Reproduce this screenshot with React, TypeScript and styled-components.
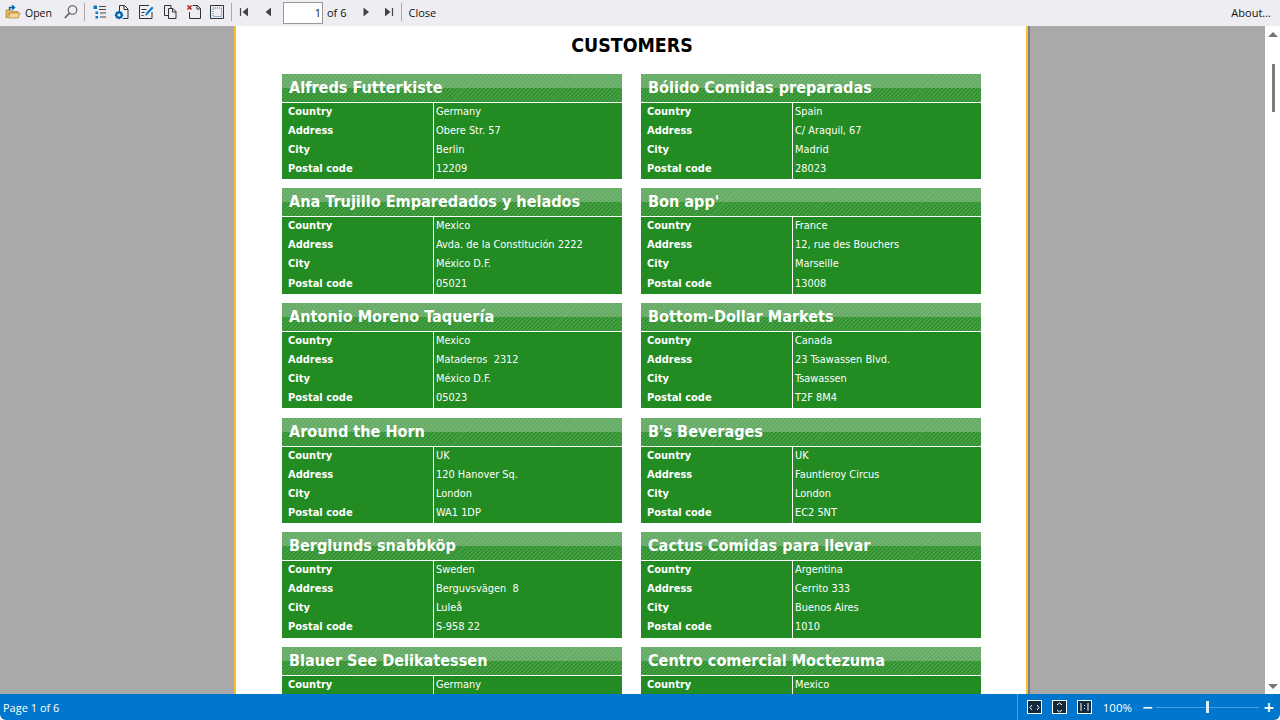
import React from "react";
import styled, { createGlobalStyle } from "styled-components";

const Global = createGlobalStyle`
  html, body { margin: 0; padding: 0; height: 100%; overflow: hidden; }
  #root { height: 100%; }
`;

const Shell = styled.div`
  width: 1280px; height: 720px; display: flex; flex-direction: column;
  font-family: "Open Sans", "Noto Sans", sans-serif; overflow: hidden;
`;
const Toolbar = styled.div`
  height: 26px; flex: none; background: #eeeef2; display: flex; align-items: center;
  color: #111; font-size: 11px; line-height: 24px; padding: 0 0 2px 5px; box-sizing: border-box;
`;
const ToolIcon = styled.span<{ $w?: number }>`
  width: ${(p) => p.$w ?? 24}px; height: 24px; flex: none; display: flex; align-items: center; justify-content: center;
`;
const Sep = styled.span<{ $mx?: number }>`
  width: 1px; height: 18px; background: #a9a9ad; flex: none; margin: 0 ${(p) => p.$mx ?? 4}px;
`;
const ToolLabel = styled.span<{ $mr?: number; $ml?: number }>`
  white-space: nowrap; margin-top: 2px; margin-left: ${(p) => p.$ml ?? 0}px; margin-right: ${(p) => p.$mr ?? 0}px;
`;
const OpenLabel = styled(ToolLabel)`font-size: 10.5px; width: 27px; margin-right: 11px;`;
const PageInput = styled.div`
  width: 37px; height: 20px; border: 1px solid #999; background: #fff; text-align: right;
  line-height: 20px; font-size: 11px; padding-right: 1px; margin: 2px 4px 0 2px; flex: none;
`;
const Spacer = styled.div`flex: 1;`;

const Middle = styled.div`flex: 1; min-height: 0; display: flex;`;
const Viewer = styled.div`
  flex: 1; background: #a9a9a9; overflow: hidden; display: flex; padding-left: 234px;
`;
const Sheet = styled.div`
  width: 794px; height: 700px; flex: none; background: #fff; box-sizing: border-box;
  border-left: 2px solid #fdbf2d; border-right: 2px solid #fdbf2d;
  box-shadow: 2px 0 0 #808080; padding: 0 44px 0 46px;
`;
const Heading = styled.h1`
  margin: 0; height: 47.7px; text-align: center; color: #000;
  font: bold 19.4px/40px "DejaVu Sans", sans-serif; font-stretch: condensed;
`;
const Grid = styled.div`display: grid; grid-template-columns: 340px 340px; column-gap: 19px; row-gap: 9.35px;`;
const Card = styled.div`background: #228b22; color: #fff; height: 105.3px; overflow: hidden;`;
const CardTitle = styled.div`
  height: 28px; border-bottom: 1px solid #fff; padding-left: 7px; white-space: nowrap;
  font: bold 16.1px/27px "DejaVu Sans", sans-serif; font-stretch: condensed; color: #fff;
  background:
    repeating-linear-gradient(135deg, rgba(255,255,255,.12) 0 1.4px, rgba(255,255,255,0) 1.4px 2.8px),
    linear-gradient(180deg, #62aa62 50%, #2f922f 50%);
`;
const Row = styled.div`display: grid; grid-template-columns: 152px 1fr; height: 19.075px;`;
const Label = styled.div`
  padding-left: 6px; font: bold 11px/17px "DejaVu Sans", sans-serif; font-stretch: condensed;
  border-right: 1px solid #fff; white-space: nowrap;
`;
const Value = styled.div`padding-left: 2px; font: 10.9px/17px "DejaVu Sans", sans-serif; font-stretch: condensed; white-space: pre;`;

const Scrollbar = styled.div`width: 15px; flex: none; background: #fff; position: relative;`;
const ScrollUp = styled.div`
  position: absolute; top: 6px; left: 3px; border-left: 5px solid transparent; border-right: 5px solid transparent; border-bottom: 5px solid #777;
`;
const ScrollDown = styled.div`
  position: absolute; bottom: 5px; left: 3px; border-left: 5px solid transparent; border-right: 5px solid transparent; border-top: 5px solid #777;
`;
const Thumb = styled.div`position: absolute; top: 38px; left: 7px; width: 3px; height: 48px; background: #7a7a7a;`;

const Status = styled.div`
  height: 26px; flex: none; background: #0077cc; color: #fff; display: flex; align-items: center;
  font-size: 11px; padding: 0 8px 0 3px; box-sizing: border-box; border-bottom-left-radius: 6px; border-bottom-right-radius: 6px;
`;
const StatusSep = styled.span`width: 1px; height: 26px; background: #4aa0dc; margin-right: 9px;`;
const ZoomIcon = styled.span`
  width: 15px; height: 14px; box-sizing: border-box; border: 1px solid #fff; background: #12293d; flex: none; margin-right: 10px;
  display: flex; align-items: center; justify-content: center; color: #fff;
`;
const Percent = styled.span`margin: 0 10px 0 1px; font-size: 11.5px;`;
const ZoomTrack = styled.span`
  width: 103px; height: 1px; background: #4aa0dc; position: relative; margin: 0 4px 0 5px; flex: none;
`;
const ZoomThumb = styled.span`position: absolute; left: 50px; top: -6px; width: 3px; height: 12px; background: #dcecf8;`;
const PlusMinus = styled.span`font: bold 14px/14px "DejaVu Sans", sans-serif; color: #fff; width: 9px; text-align: center;`;

type C = { name: string; country: string; address?: string; city?: string; postal?: string };
const customers: C[] = [
  { name: "Alfreds Futterkiste", country: "Germany", address: "Obere Str. 57", city: "Berlin", postal: "12209" },
  { name: "Bólido Comidas preparadas", country: "Spain", address: "C/ Araquil, 67", city: "Madrid", postal: "28023" },
  { name: "Ana Trujillo Emparedados y helados", country: "Mexico", address: "Avda. de la Constitución 2222", city: "México D.F.", postal: "05021" },
  { name: "Bon app'", country: "France", address: "12, rue des Bouchers", city: "Marseille", postal: "13008" },
  { name: "Antonio Moreno Taquería", country: "Mexico", address: "Mataderos  2312", city: "México D.F.", postal: "05023" },
  { name: "Bottom-Dollar Markets", country: "Canada", address: "23 Tsawassen Blvd.", city: "Tsawassen", postal: "T2F 8M4" },
  { name: "Around the Horn", country: "UK", address: "120 Hanover Sq.", city: "London", postal: "WA1 1DP" },
  { name: "B's Beverages", country: "UK", address: "Fauntleroy Circus", city: "London", postal: "EC2 5NT" },
  { name: "Berglunds snabbköp", country: "Sweden", address: "Berguvsvägen  8", city: "Luleå", postal: "S-958 22" },
  { name: "Cactus Comidas para llevar", country: "Argentina", address: "Cerrito 333", city: "Buenos Aires", postal: "1010" },
  { name: "Blauer See Delikatessen", country: "Germany" },
  { name: "Centro comercial Moctezuma", country: "Mexico" },
];

const S = (p: { children: React.ReactNode; w?: number }) => (
  <svg width={p.w ?? 16} height="16" viewBox="0 0 16 16" fill="none">{p.children}</svg>
);
const ink = "#333";
const blue = "#0063b1";

export default function App() {
  return (
    <Shell>
      <Global />
      <Toolbar>
        <ToolIcon $w={16}>
          <S>
            <path d="M1 6h5l1 1.500h6v1.800H4L2 14H1z" fill="#e8b862" stroke="#b08030" strokeWidth=".7" />
            <path d="M3.500 14l1.400-5H15l-1.800 5z" fill="#f4d495" stroke="#b08030" strokeWidth=".7" />
            <path d="M4.500 6V3.500h4M7 1.200l2.500 2.300L7 5.800" stroke="#0063b1" strokeWidth="1.4" />
          </S>
        </ToolIcon>
        <OpenLabel $ml={4}>Open</OpenLabel>
        <ToolIcon $w={16}>
          <S>
            <circle cx="9.500" cy="6" r="4.300" stroke="#555" strokeWidth="1.1" />
            <path d="M6.400 9.200L1.800 14" stroke="#666" strokeWidth="1.8" />
          </S>
        </ToolIcon>
        <Sep $mx={5} />
        <ToolIcon $w={20}>
          <S>
            <path d="M1.500 1.500h3.500v3.500H1.500zM3.500 7.500h2.600v2.600H3.500zM3.500 12h2.600v2.600H3.500z" fill="#0a78d0" />
            <path d="M7 2.500h7M7 5.500h7M8 9h6M8 13h6" stroke="#444" />
          </S>
        </ToolIcon>
        <ToolIcon $w={24}>
          <S>
            <path d="M5.500 7V1.500h5l3.500 3.500v9.500H9" stroke={ink} />
            <path d="M10 1.500V5.500h4" stroke={ink} />
            <circle cx="5" cy="11" r="2.700" stroke={blue} strokeWidth="2.200" />
            <path d="M5 6.800v1.400M5 13.800v1.400M.8 11h1.400M7.800 11h1.400M2 8l1 1M7 13l1 1M2 14l1-1M7 9l1-1" stroke={blue} strokeWidth="1.3" />
          </S>
        </ToolIcon>
        <ToolIcon $w={24}>
          <S>
            <path d="M14 8v6.500H1.500v-13H11" stroke={ink} />
            <path d="M3.500 5.500h5M3.500 8.500h3M3.500 11.500h2" stroke={ink} />
            <path d="M7 12l1-3 6-6.500 1.500 1.500-6 6.500z" fill="#0a78d0" />
          </S>
        </ToolIcon>
        <ToolIcon $w={24}>
          <S>
            <path d="M9 4.500V1.500H2.500v10H6" stroke={ink} />
            <path d="M6.500 4.500h4.500l3 3v7H6.500z" fill="#eeeef2" stroke={ink} />
            <path d="M10.500 4.500V8h3.500" stroke={ink} />
          </S>
        </ToolIcon>
        <ToolIcon $w={24}>
          <S>
            <path d="M6.500 1.500h5l3 3v10H3.500V8" stroke={ink} />
            <path d="M11 1.500V5h3.500" stroke={ink} />
            <path d="M1.500 1.500l4 4M5.500 1.500l-4 4" stroke="#b02020" strokeWidth="1.5" />
          </S>
        </ToolIcon>
        <ToolIcon $w={22}>
          <S>
            <path d="M1.500 1.500h13v13h-13z" stroke={ink} />
            <path d="M4 4h8.500v8.500H4z" stroke="#1a7ed0" strokeDasharray="1 1" />
          </S>
        </ToolIcon>
        <Sep $mx={3} />
        <ToolIcon $w={20}>
          <S>
            <path d="M3.500 4v8" stroke="#444" strokeWidth="1.2" />
            <path d="M11 3.500v9L5.500 8z" fill="#444" />
          </S>
        </ToolIcon>
        <ToolIcon $w={26}>
          <S><path d="M11 3.500v9L5.500 8z" fill="#444" /></S>
        </ToolIcon>
        <PageInput>1</PageInput>
        <ToolLabel $mr={6}>of 6</ToolLabel>
        <ToolIcon $w={27}>
          <S><path d="M5.500 3.500v9L11 8z" fill="#444" /></S>
        </ToolIcon>
        <ToolIcon $w={18}>
          <S>
            <path d="M12.500 4v8" stroke="#444" strokeWidth="1.2" />
            <path d="M5 3.500v9L10.500 8z" fill="#444" />
          </S>
        </ToolIcon>
        <Sep $mx={4} />
        <ToolLabel $ml={2}>Close</ToolLabel>
        <Spacer />
        <ToolLabel $mr={9}>About...</ToolLabel>
      </Toolbar>
      <Middle>
        <Viewer>
          <Sheet>
            <Heading>CUSTOMERS</Heading>
            <Grid>
              {customers.map((c) => (
                <Card key={c.name}>
                  <CardTitle>{c.name}</CardTitle>
                  <Row><Label>Country</Label><Value>{c.country}</Value></Row>
                  {c.address && <Row><Label>Address</Label><Value>{c.address}</Value></Row>}
                  {c.city && <Row><Label>City</Label><Value>{c.city}</Value></Row>}
                  {c.postal && <Row><Label>Postal code</Label><Value>{c.postal}</Value></Row>}
                </Card>
              ))}
            </Grid>
          </Sheet>
        </Viewer>
        <Scrollbar>
          <ScrollUp />
          <Thumb />
          <ScrollDown />
        </Scrollbar>
      </Middle>
      <Status>
        <span>Page 1 of 6</span>
        <Spacer />
        <StatusSep />
        <ZoomIcon>
          <svg width="11" height="7" viewBox="0 0 11 7" fill="none"><path d="M3 1L1 3.500l2 2.500M8 1l2 2.500L8 6" stroke="#fff" /></svg>
        </ZoomIcon>
        <ZoomIcon>
          <svg width="7" height="11" viewBox="0 0 7 11" fill="none"><path d="M1 3l2.500-2L6 3M1 8l2.500 2L6 8" stroke="#fff" /></svg>
        </ZoomIcon>
        <ZoomIcon>
          <svg width="11" height="10" viewBox="0 0 11 10" fill="none"><path d="M2 1v8M9 1v8M5.500 3v1M5.500 6v1" stroke="#fff" /></svg>
        </ZoomIcon>
        <Percent>100%</Percent>
        <PlusMinus>−</PlusMinus>
        <ZoomTrack><ZoomThumb /></ZoomTrack>
        <PlusMinus>+</PlusMinus>
      </Status>
    </Shell>
  );
}
